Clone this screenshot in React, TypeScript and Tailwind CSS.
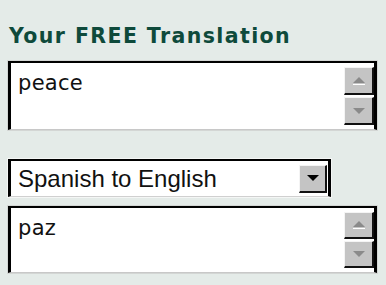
import React from "react";

function ArrowUp({ color = "#8a8a8a" }: { color?: string }) {
  return (
    <svg width="14" height="10" viewBox="0 0 14 10">
      <polygon points="1,7 7,1 13,7" fill={color} />
      <rect x="1" y="8" width="12" height="1" fill="#ffffff" />
    </svg>
  );
}

function ArrowDown({ color = "#8a8a8a" }: { color?: string }) {
  return (
    <svg width="14" height="10" viewBox="0 0 14 10">
      <polygon points="1,2 13,2 7,8" fill={color} />
    </svg>
  );
}

function ScrollButton({ dir }: { dir: "up" | "down" }) {
  return (
    <div className="flex-1 flex items-center justify-center bg-[#c4c4c4] border-t border-l border-t-[#f4f4f4] border-l-[#f4f4f4] border-b-2 border-r-2 border-b-[#111] border-r-[#111]">
      {dir === "up" ? <ArrowUp /> : <ArrowDown />}
    </div>
  );
}

function TextBox({ text, height }: { text: string; height: string }) {
  return (
    <div className={`w-[371px] ${height} border border-[#d3d6d4] bg-white`}>
      <div className="flex h-full border-t-2 border-l-[3px] border-r-[3px] border-black border-b border-b-[#c8c8c8]">
        <div className="flex-1 pl-[7px] pt-[7px] text-[21px] leading-[26px] text-[#111] font-['DejaVu_Sans',sans-serif] tracking-[0.3px]">
          {text}
        </div>
        <div className="w-[30px] flex flex-col gap-[2px] py-[4px] bg-white">
          <ScrollButton dir="up" />
          <ScrollButton dir="down" />
        </div>
      </div>
    </div>
  );
}

export default function App() {
  return (
    <div className="w-[386px] h-[285px] bg-[#e4ebe8] px-[7px] pt-[24px] overflow-hidden">
      <h2 className="pl-[2px] text-[20.5px] leading-[24px] font-bold tracking-[1.4px] text-[#0e4a3b] font-['DejaVu_Sans',sans-serif]">
        Your FREE Translation
      </h2>
      <div className="mt-[12px]">
        <TextBox text="peace" height="h-[71px]" />
      </div>
      <div className="mt-[27px] w-[325px] h-[40px] border border-[#f4f6f5] bg-white">
        <div className="flex h-full items-center border-t-2 border-l-[3px] border-r-[3px] border-black border-b border-b-[#d0d0d0]">
          <div className="flex-1 pl-[7px] text-[24px] leading-[26px] text-[#111] font-['Liberation_Sans',sans-serif]">
            Spanish to English
          </div>
          <div className="w-[28px] h-[28px] mr-[1px] flex items-center justify-center bg-[#c4c4c4] border-t border-l border-[#f4f4f4] border-b-2 border-r-2 border-b-[#111] border-r-[#111]">
            <ArrowDown color="#000" />
          </div>
        </div>
      </div>
      <div className="mt-[7px]">
        <TextBox text="paz" height="h-[69px]" />
      </div>
    </div>
  );
}
